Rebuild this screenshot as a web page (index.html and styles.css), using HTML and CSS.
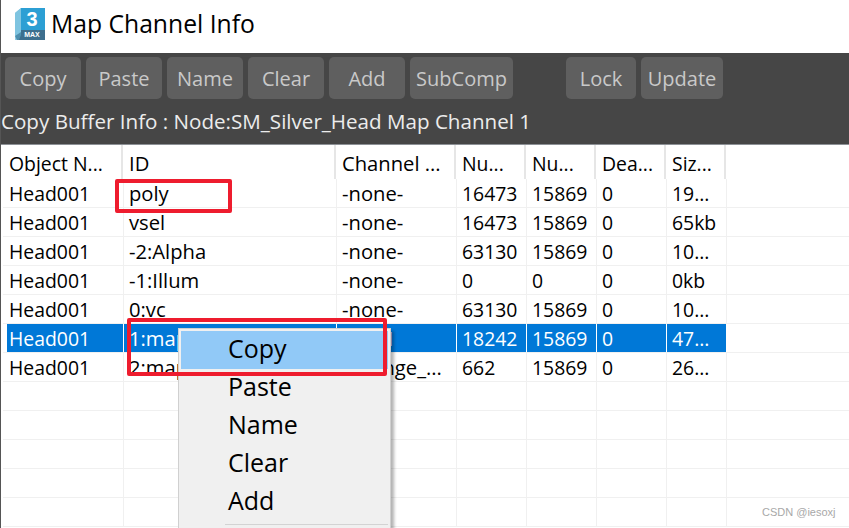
FILE: index.html
```html
<!DOCTYPE html>
<html lang="en">
<head>
<meta charset="utf-8">
<title>Map Channel Info</title>
<link rel="stylesheet" href="styles.css">
</head>
<body>
<div class="window">
  <header class="titlebar">
    <svg class="logo" width="30" height="32" viewBox="0 0 30 32">
      <path d="M6 0L0 5V32H6Z" fill="#8ccbe4"/>
      <path d="M0 5L6 0V24L0 28Z" fill="#7fc4e0"/>
      <path d="M0 28L6 24V32H2Z" fill="#4f8fae"/>
      <path d="M6 0H30V22H6Z" fill="#2c9fd4"/>
      <path d="M6 22H30V32H4L6 27Z" fill="#3d6f8e"/>
      <text class="logo-num" x="17" y="18" text-anchor="middle">3</text>
      <text class="logo-max" x="17" y="29.3" text-anchor="middle">MAX</text>
    </svg>
    <h1 class="title">Map Channel Info</h1>
  </header>
  <section class="panel">
    <div class="toolbar">
      <button class="btn">Copy</button>
      <button class="btn">Paste</button>
      <button class="btn">Name</button>
      <button class="btn">Clear</button>
      <button class="btn">Add</button>
      <button class="btn btn-sub">SubComp</button>
      <button class="btn btn-lock">Lock</button>
      <button class="btn btn-update">Update</button>
    </div>
    <div class="buffer">Copy Buffer Info : Node:SM_Silver_Head Map Channel 1</div>
  </section>
  <section class="grid">
    <div class="row head"><span>Object N...</span><span>ID</span><span>Channel ...</span><span>Nu...</span><span>Nu...</span><span>Dea...</span><span>Siz...</span><span class="fill"></span></div>
    <div class="row"><span>Head001</span><span>poly</span><span>-none-</span><span>16473</span><span>15869</span><span>0</span><span>19...</span><span class="fill"></span></div>
    <div class="row"><span>Head001</span><span>vsel</span><span>-none-</span><span>16473</span><span>15869</span><span>0</span><span>65kb</span><span class="fill"></span></div>
    <div class="row"><span>Head001</span><span>-2:Alpha</span><span>-none-</span><span>63130</span><span>15869</span><span>0</span><span>10...</span><span class="fill"></span></div>
    <div class="row"><span>Head001</span><span>-1:Illum</span><span>-none-</span><span>0</span><span>0</span><span>0</span><span>0kb</span><span class="fill"></span></div>
    <div class="row"><span>Head001</span><span>0:vc</span><span>-none-</span><span>63130</span><span>15869</span><span>0</span><span>10...</span><span class="fill"></span></div>
    <div class="row selected"><span>Head001</span><span>1:map</span><span>map1</span><span>18242</span><span>15869</span><span>0</span><span>47...</span><span class="fill"></span></div>
    <div class="row"><span>Head001</span><span>2:map</span><span>Arrange_...</span><span>662</span><span>15869</span><span>0</span><span>26...</span><span class="fill"></span></div>
    <div class="row"><span></span><span></span><span></span><span></span><span></span><span></span><span></span><span class="fill"></span></div>
    <div class="row"><span></span><span></span><span></span><span></span><span></span><span></span><span></span><span class="fill"></span></div>
    <div class="row"><span></span><span></span><span></span><span></span><span></span><span></span><span></span><span class="fill"></span></div>
    <div class="row"><span></span><span></span><span></span><span></span><span></span><span></span><span></span><span class="fill"></span></div>
    <div class="row"><span></span><span></span><span></span><span></span><span></span><span></span><span></span><span class="fill"></span></div>
  </section>
  <ul class="menu">
    <li class="item active">Copy</li>
    <li class="item">Paste</li>
    <li class="item">Name</li>
    <li class="item">Clear</li>
    <li class="item">Add</li>
    <li class="sep"></li>
  </ul>
  <div class="mark mark-poly"></div>
  <div class="mark mark-copy"></div>
  <div class="watermark">CSDN @iesoxj</div>
</div>
</body>
</html>
```
FILE: styles.css
```css
* { box-sizing: border-box; }
html, body { margin: 0; padding: 0; background: #fff; }
body { width: 849px; height: 528px; overflow: hidden; font-family: "Open Sans", "Noto Sans", sans-serif; }
.window { position: relative; width: 849px; height: 528px; overflow: hidden; border-left: 1px solid #555; }

.titlebar { height: 53px; display: flex; align-items: flex-start; background: #fff; }
.logo { margin: 8px 0 0 14px; flex: none; }
.logo-num { font: 700 20px "Liberation Sans", sans-serif; fill: #fff; }
.logo-max { font: 700 7px "Liberation Sans", sans-serif; fill: #fff; }
.title { margin: 6px 0 0 6px; font-weight: 400; font-size: 24.7px; line-height: 36px; color: #000; }

.panel { height: 92px; background: #464646; border-bottom: 1px solid #8d9196; margin-left: -1px; }
.toolbar { display: flex; gap: 5px; padding: 4px 0 0 5px; }
.btn { width: 76px; height: 42px; padding: 2px 0 0; border: 0; border-radius: 5px; background: #5f5f5f; color: #c9c9c9; font: 400 20px/38px "Open Sans", "Noto Sans", sans-serif; }
.btn-sub { width: 103px; margin-right: 48px; }
.btn-lock { width: 70px; }
.btn-update { width: 82px; }
.buffer { padding: 0 0 0 1px; margin-top: 5px; color: #ececec; font-size: 20.6px; line-height: 34px; white-space: nowrap; }

.grid { padding-left: 2px; }
.row { display: grid; grid-template-columns: 117px 213px 120px 70px 70px 70px 60px 1fr; height: 29px; padding-left: 4px; border-bottom: 1px solid #f0f0f0; font-size: 19.4px; line-height: 30px; color: #000; }
.row span { display: block; padding-left: 5px; border-right: 1px solid #f0f0f0; white-space: nowrap; overflow: hidden; }
.row span:first-child { padding-left: 2px; }
.row span:nth-child(2), .row span:nth-child(3) { font-size: 20.2px; line-height: 28px; }
.row .fill { border-right: 0; }
.head { height: 34px; border-bottom: 0; line-height: 38px; }
.head span { border-right: 2px solid #e6e6e6; margin-left: -1px; margin-right: 1px; padding-left: 6px; }
.row.head span:first-child { padding-left: 3px; }
.row.head span:nth-child(2), .row.head span:nth-child(3) { line-height: 36px; }
.selected span { background: #0078d7; color: #fff; border-right-color: #fff; }
.selected .fill { background: transparent; }

.menu { position: absolute; left: 177px; top: 328px; width: 213px; height: 220px; margin: 0; padding: 2px 2px 0; list-style: none; background: #f0f0f0; border: 1px solid #d0d0d0; box-shadow: 3px 3px 3px rgba(0,0,0,.3); }
.item { height: 38px; padding-left: 47px; font-size: 25px; line-height: 35px; color: #000; }
.active { background: #91c9f7; }
.sep { height: 1px; margin: 3px 0 0 44px; background: #d3d3d3; }

.mark { position: absolute; border: 4px solid #ee1c2e; border-radius: 2px; }
.mark-poly { left: 114px; top: 179px; width: 117px; height: 34px; }
.mark-copy { left: 126px; top: 318px; width: 260px; height: 58px; }

.watermark { position: absolute; left: 761px; top: 505px; font: 11px/14px "Liberation Sans", sans-serif; color: #a8a8a8; }
```
